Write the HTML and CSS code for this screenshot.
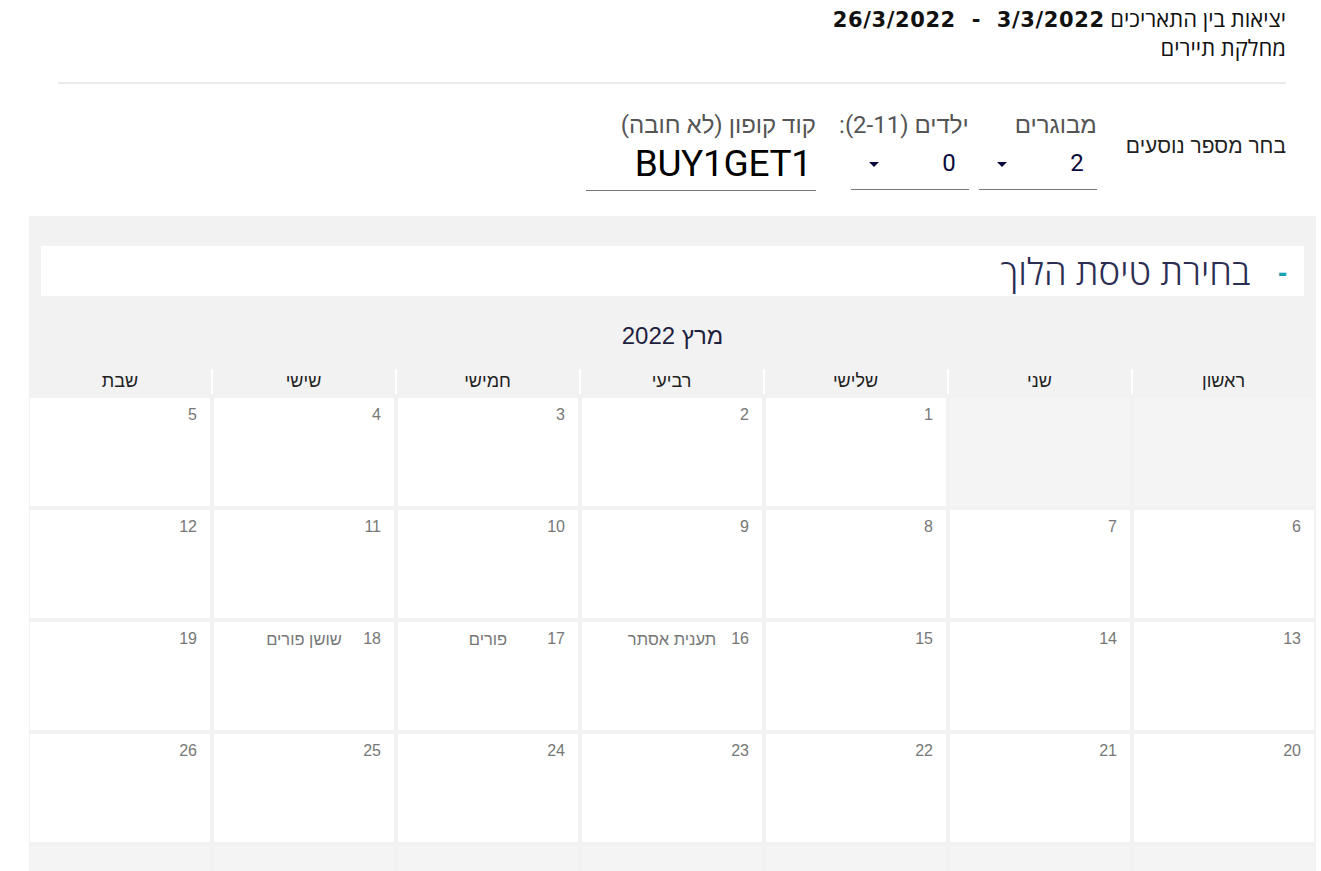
FILE: index.html
```html
<!DOCTYPE html>
<html lang="he" dir="rtl">
<head>
<meta charset="utf-8">
<title>בחירת טיסה</title>
<link rel="stylesheet" href="styles.css">
</head>
<body>
<header class="top">
  <div class="line1">יציאות בין התאריכים <b class="dates">3/3/2022&nbsp; - &nbsp;26/3/2022</b></div>
  <div class="line2">מחלקת תיירים</div>
</header>
<hr class="divider">
<section class="pax">
  <div class="pax-title">בחר מספר נוסעים</div>
  <div class="field sel">
    <div class="label">מבוגרים</div>
    <div class="control"><span class="val">2</span><span class="caret"></span></div>
  </div>
  <div class="field sel">
    <div class="label">ילדים (2-11):</div>
    <div class="control"><span class="val">0</span><span class="caret"></span></div>
  </div>
  <div class="field coupon">
    <div class="label">קוד קופון (לא חובה)</div>
    <div class="control"><span class="code">BUY1GET1</span></div>
  </div>
</section>
<section class="panel">
  <div class="panel-head"><span class="dash">-</span><span class="panel-title">בחירת טיסת הלוך</span></div>
  <div class="cal">
    <div class="month">מרץ 2022</div>
    <div class="grid">
      <div class="dh">ראשון</div><div class="dh">שני</div><div class="dh">שלישי</div><div class="dh">רביעי</div><div class="dh">חמישי</div><div class="dh">שישי</div><div class="dh">שבת</div>

      <div class="day empty"></div><div class="day empty"></div>
      <div class="day"><div class="dtop"><span class="num">1</span></div></div>
      <div class="day"><div class="dtop"><span class="num">2</span></div></div>
      <div class="day"><div class="dtop"><span class="num">3</span></div></div>
      <div class="day"><div class="dtop"><span class="num">4</span></div></div>
      <div class="day"><div class="dtop"><span class="num">5</span></div></div>

      <div class="day"><div class="dtop"><span class="num">6</span></div></div>
      <div class="day"><div class="dtop"><span class="num">7</span></div></div>
      <div class="day"><div class="dtop"><span class="num">8</span></div></div>
      <div class="day"><div class="dtop"><span class="num">9</span></div></div>
      <div class="day"><div class="dtop"><span class="num">10</span></div></div>
      <div class="day"><div class="dtop"><span class="num">11</span></div></div>
      <div class="day"><div class="dtop"><span class="num">12</span></div></div>

      <div class="day"><div class="dtop"><span class="num">13</span></div></div>
      <div class="day"><div class="dtop"><span class="num">14</span></div></div>
      <div class="day"><div class="dtop"><span class="num">15</span></div></div>
      <div class="day"><div class="dtop"><span class="num">16</span><span class="hol">תענית אסתר</span></div></div>
      <div class="day"><div class="dtop"><span class="num">17</span><span class="hol">פורים</span></div></div>
      <div class="day"><div class="dtop"><span class="num">18</span><span class="hol">שושן פורים</span></div></div>
      <div class="day"><div class="dtop"><span class="num">19</span></div></div>

      <div class="day"><div class="dtop"><span class="num">20</span></div></div>
      <div class="day"><div class="dtop"><span class="num">21</span></div></div>
      <div class="day"><div class="dtop"><span class="num">22</span></div></div>
      <div class="day"><div class="dtop"><span class="num">23</span></div></div>
      <div class="day"><div class="dtop"><span class="num">24</span></div></div>
      <div class="day"><div class="dtop"><span class="num">25</span></div></div>
      <div class="day"><div class="dtop"><span class="num">26</span></div></div>

      <div class="day empty"></div><div class="day empty"></div><div class="day empty"></div><div class="day empty"></div><div class="day empty"></div><div class="day empty"></div><div class="day empty"></div>
    </div>
  </div>
</section>
</body>
</html>
```
FILE: styles.css
```css
html, body {
  margin: 0;
  padding: 0;
  background: #fff;
  overflow: hidden;
}
body {
  font-family: "Open Sans", "Liberation Sans", sans-serif;
  color: #111;
  height: 871px;
}
.top {
  padding: 5px 35px 0 0;
  font-size: 22px;
  line-height: 27px;
  color: #111;
}
.dates {
  font-family: "DejaVu Sans", "Liberation Sans", sans-serif;
  font-weight: 700;
  font-size: 21px;
  letter-spacing: 0.6px;
}
.divider {
  border: 0;
  height: 2px;
  background: #ebebeb;
  margin: 21px 35px 0 58px;
}
.pax {
  display: flex;
  align-items: flex-start;
  margin: 26px 35px 0 0;
  font-family: "Liberation Sans", Arial, sans-serif;
}
.pax-title {
  font-size: 21px;
  color: #222;
  margin-top: 24px;
  margin-left: 29px;
  white-space: nowrap;
}
.field .label {
  font-family: Roboto, "Liberation Sans", sans-serif;
  font-size: 24px;
  color: #555;
  line-height: 30px;
  height: 30px;
  white-space: nowrap;
}
.field .control {
  display: flex;
  align-items: center;
  justify-content: space-between;
  border-bottom: 1px solid #777;
  height: 50px;
  box-sizing: border-box;
}
.sel {
  width: 118px;
  margin-left: 10px;
}
.sel + .sel {
  margin-left: 35px;
}
.sel .control {
  padding: 0 13px 4px 18px;
}
.val {
  font-family: Roboto, "Liberation Sans", sans-serif;
  font-size: 24px;
  color: #0a0a3c;
}
.caret {
  width: 0;
  height: 0;
  border-left: 5px solid transparent;
  border-right: 5px solid transparent;
  border-top: 5px solid #0a0a3c;
  margin-top: 3px;
}
.coupon {
  width: 230px;
}
.coupon .control {
  padding: 0 4px 4px 0;
  height: 51px;
}
.code {
  font-family: Roboto, "Liberation Sans", sans-serif;
  font-size: 37px;
  color: #000;
  letter-spacing: -0.3px;
}
.panel {
  background: #f2f2f2;
  margin: 25px 5px 0 29px;
  padding: 30px 2px 0;
  height: 626px;
  overflow: hidden;
}
.panel-head {
  background: #fff;
  margin: 0 10px;
  height: 50px;
  display: flex;
  align-items: center;
  padding-right: 17px;
}
.dash {
  color: #1aa3b4;
  font-size: 27px;
  font-weight: 700;
  margin-left: 28px;
}
.panel-title {
  font-family: "Open Sans", "Liberation Sans", sans-serif;
  font-weight: 300;
  font-size: 36.5px;
  color: #2b2d52;
  line-height: 46px;
}
.cal {
  margin-top: 22px;
}
.month {
  text-align: center;
  font-family: "Liberation Sans", Arial, sans-serif;
  font-size: 24px;
  color: #1e1e3e;
  line-height: 30px;
  padding-top: 3px;
  margin-bottom: 18px;
}
.grid {
  display: grid;
  grid-template-columns: repeat(7, 180px);
  grid-auto-rows: 108px;
  grid-template-rows: 25px;
  gap: 4px;
  font-family: "Liberation Sans", Arial, sans-serif;
}
.dh {
  text-align: center;
  font-size: 18px;
  color: #222;
  line-height: 25px;
}
.dh:not(:nth-child(7)) {
  border-left: 2px solid #fff;
  margin-left: -3px;
}
.day {
  background: #fff;
  padding: 7px 13px 0 0;
}
.day.empty {
  background: #f4f4f4;
}
.dtop {
  display: grid;
  color: #777;
}
.num {
  grid-area: 1 / 1;
  justify-self: start;
  font-size: 16px;
  line-height: 20px;
}
.hol {
  grid-area: 1 / 1;
  justify-self: center;
  font-size: 16.5px;
  line-height: 20px;
  margin-left: 13px;
}
```
